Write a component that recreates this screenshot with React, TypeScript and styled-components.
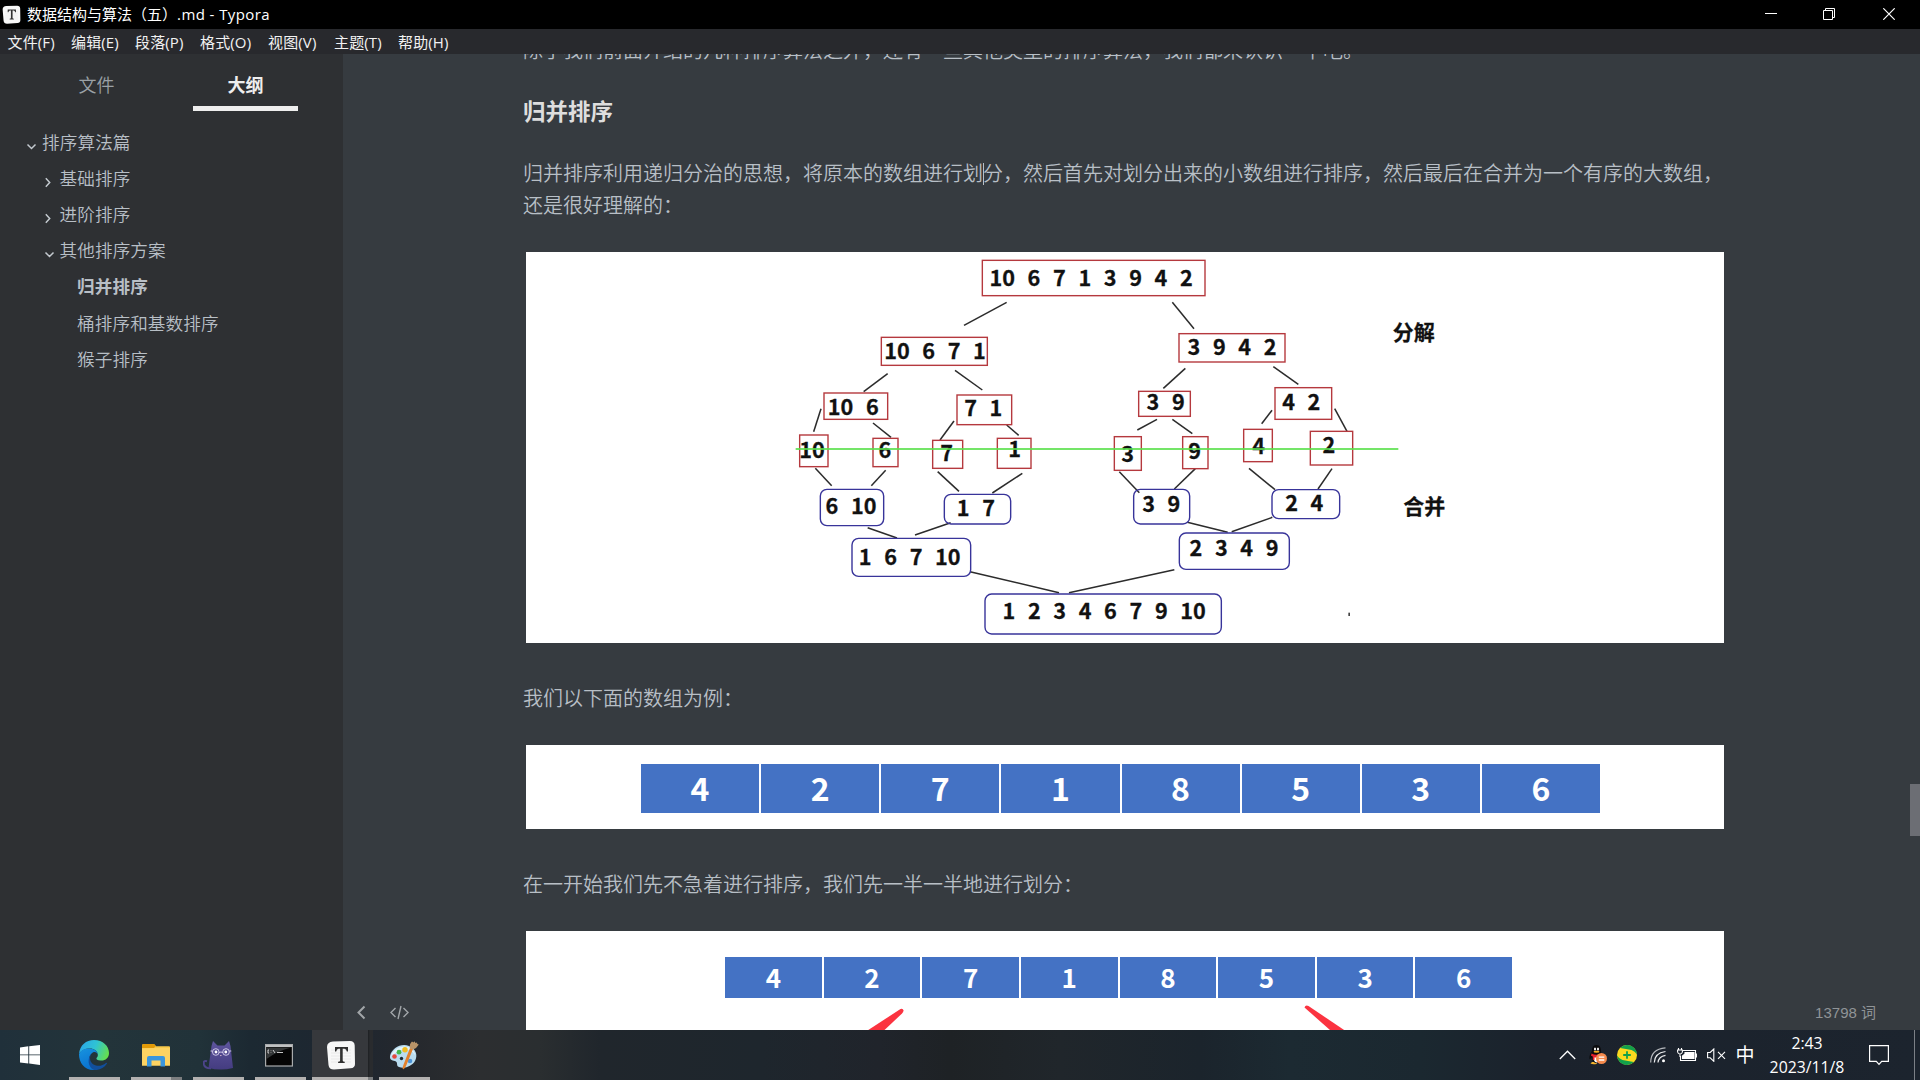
import React from "react";
import styled, { createGlobalStyle } from "styled-components";

const cjk = `"Noto Sans CJK SC", sans-serif`;
const ui = `"Open Sans", "Noto Sans", ${cjk}`;

const GlobalStyle = createGlobalStyle`
  * { box-sizing: border-box; }
  body { margin: 0; background: #363b40; }
`;

const Screen = styled.div`
  width: 1920px;
  height: 1080px;
  display: flex;
  flex-direction: column;
  overflow: hidden;
  font-family: ${ui};
`;

/* ---------- window chrome ---------- */

const TitleBar = styled.header`
  height: 29px;
  flex: none;
  display: flex;
  align-items: center;
  background: #000;
  color: #fff;
  padding: 0 1px 0 2px;
`;

const Title = styled.div`
  flex: 1;
  margin-left: 6px;
  font-size: 15px;
  line-height: 26px;
  height: 28px;
  white-space: pre;
`;

const Latin = styled.span<{ $spacing?: number }>`
  letter-spacing: ${(p) => p.$spacing ?? 0}px;
`;

const WindowButton = styled.div<{ $width: number }>`
  width: ${(p) => p.$width}px;
  height: 29px;
  display: flex;
  align-items: center;
  justify-content: center;
  padding-bottom: 1px;
`;

const MenuBar = styled.nav`
  height: 25px;
  flex: none;
  display: flex;
  gap: 16px;
  padding-left: 7.5px;
  background: #28292d;
  color: #f2f2f2;
`;

const MenuItem = styled.div<{ $width: number }>`
  width: ${(p) => p.$width}px;
  font-size: 15px;
  line-height: 27px;
  white-space: nowrap;
  letter-spacing: 0.15px;
`;

const Workspace = styled.div`
  height: 976px;
  flex: none;
  display: flex;
`;

/* ---------- sidebar ---------- */

const Sidebar = styled.aside`
  width: 343px;
  flex: none;
  background: #2e3033;
  color: #b8bfc6;
`;

const Tabs = styled.div`
  display: flex;
  gap: 44px;
  padding-left: 44px;
  height: 57px;
`;

const Tab = styled.div<{ $active?: boolean }>`
  width: 105px;
  height: 57px;
  text-align: center;
  font: ${(p) => (p.$active ? 700 : 350)} 18px/60px ${cjk};
  color: ${(p) => (p.$active ? "#eee" : "#9ba1a6")};
  border-bottom: ${(p) => (p.$active ? "5px solid #eee" : "0")};
`;

const Outline = styled.ul`
  list-style: none;
  margin: 0;
  padding: 13px 0 0 0;
`;

const OutlineRow = styled.li<{ $level: number; $active?: boolean }>`
  height: 36.1px;
  display: flex;
  align-items: center;
  gap: 5px;
  padding-left: ${(p) => 25 + (p.$level - 1) * 17.5}px;
  font: ${(p) => (p.$active ? 700 : 350)} 17.6px/36px ${cjk};
  letter-spacing: 0.12px;
`;

const ArrowSlot = styled.span`
  width: 12px;
  height: 14px;
  margin-top: 8px;
  display: flex;
  align-items: center;
  justify-content: center;
`;

/* ---------- editor ---------- */

const Editor = styled.main`
  position: relative;
  flex: 1;
  height: 976px;
  overflow: hidden;
  background: #363b40;
`;

const Article = styled.article`
  width: 1203px;
  margin: -20px 0 0 180px;
  color: #b8bfc6;
`;

const Paragraph = styled.p<{ $top?: number }>`
  margin: ${(p) => p.$top ?? 0}px 0 0;
  font: 350 20px/32px ${cjk};
  white-space: nowrap;
`;

const Heading = styled.h4`
  margin: 26px 0 0;
  height: 38px;
  font: 700 22.5px/36px ${cjk};
  color: #dedede;
`;

const Caret = styled.span`
  display: inline-block;
  width: 1px;
  height: 22px;
  margin-right: -1px;
  vertical-align: -4px;
  background: #b8bfc6;
`;

const Figure = styled.figure<{ $height: number; $pad?: number }>`
  width: 1198px;
  height: ${(p) => p.$height}px;
  margin: 31px 0 0 3px;
  padding-top: ${(p) => p.$pad ?? 0}px;
  background: #fff;
  overflow: hidden;
`;

const ArrayRow = styled.div<{ $left: number; $width: number; $height: number }>`
  display: flex;
  gap: 2px;
  width: ${(p) => p.$width}px;
  height: ${(p) => p.$height}px;
  margin-left: ${(p) => p.$left}px;
`;

const ArrayCell = styled.div<{ $size: number }>`
  flex: 1;
  display: flex;
  align-items: center;
  justify-content: center;
  background: #4472c4;
  color: #fff;
  font: 700 ${(p) => p.$size}px/1 ${cjk};
  padding-bottom: ${(p) => (p.$size > 30 ? 3 : 1)}px;
`;

const ScrollThumb = styled.div`
  position: absolute;
  right: 0;
  top: 730px;
  width: 10px;
  height: 52px;
  background: #6c6e74;
`;

const FooterTools = styled.div`
  position: absolute;
  left: 12px;
  bottom: 8px;
  display: flex;
  align-items: center;
  gap: 21px;
`;

const WordCount = styled.div`
  position: absolute;
  right: 44px;
  bottom: 6px;
  font: 400 15px/22px "Liberation Sans", ${cjk};
  color: #909497;
`;

/* ---------- taskbar ---------- */

const Taskbar = styled.footer`
  height: 50px;
  flex: none;
  display: flex;
  justify-content: space-between;
  background: linear-gradient(
    90deg,
    #20303a 0,
    #23343a 100px,
    #213239 200px,
    #1c2932 250px,
    #1e2630 350px,
    #25282d 410px,
    #2c2e30 480px,
    #2a2e30 540px,
    #20262c 600px,
    #1e262d 760px,
    #20242b 880px,
    #1e2225 950px,
    #20262b 1060px,
    #1b242c 1200px,
    #1c2a32 1290px,
    #1b2830 1420px,
    #1b222c 1540px,
    #1c242e 100%
  );
`;

const Apps = styled.div`
  display: flex;
`;

const AppButton = styled.div<{ $width: number; $gap?: number; $active?: boolean }>`
  width: ${(p) => p.$width}px;
  margin-right: ${(p) => p.$gap ?? 11}px;
  height: 50px;
  display: flex;
  flex-direction: column;
  justify-content: space-between;
  align-items: center;
  background: ${(p) => (p.$active ? "linear-gradient(90deg,#36383c 56px,#1d1f22 56px,#292b2e 58px)" : "none")};
`;

const AppIcon = styled.div<{ $shift?: number }>`
  height: 47px;
  padding-top: 3px;
  margin-left: ${(p) => p.$shift ?? 0}px;
  display: flex;
  align-items: center;
`;

const Running = styled.div<{ $stacked?: number }>`
  align-self: stretch;
  height: 3px;
  background: linear-gradient(
    90deg,
    #b3b1b0 calc(100% - ${(p) => p.$stacked ?? 0}px),
    #7c7e80 calc(100% - ${(p) => p.$stacked ?? 0}px)
  );
`;

const Tray = styled.div`
  display: flex;
  align-items: center;
  height: 50px;
  color: #fff;
`;

const TraySlot = styled.div<{ $width: number }>`
  width: ${(p) => p.$width}px;
  height: 50px;
  display: flex;
  align-items: center;
  justify-content: center;
`;

const InputMode = styled(TraySlot)`
  font: 400 19px/1 ${cjk};
  padding-bottom: 3px;
  margin-right: 5px;
`;

const Clock = styled.div`
  width: 90px;
  text-align: center;
  font: 400 15.8px/23.5px ${ui};
  padding-top: 1px;
`;

const NotificationSlot = styled(TraySlot)`
  padding-right: 8px;
`;

const ShowDesktop = styled.div`
  width: 6px;
  height: 50px;
  border-left: 1px solid #7b8086;
`;

/* ---------- merge sort diagram ---------- */

type DiagramNode = {
  box: [number, number, number, number];
  values: string;
  at: [number, number];
  merged?: boolean;
};

const nodes: DiagramNode[] = [
  { box: [607, 46, 668, 106], values: "10 6 7 1 3 9 4 2", at: [632, 123] },
  { box: [304, 277, 318, 84], values: "10 6 7 1", at: [316, 342] },
  { box: [1197, 266, 318, 85], values: "3 9 4 2", at: [1226, 330] },
  { box: [132, 444, 191, 79], values: "10 6", at: [147, 512] },
  { box: [531, 450, 164, 89], values: "7 1", at: [556, 514] },
  { box: [1076, 439, 155, 75], values: "3 9", at: [1103, 495] },
  { box: [1485, 428, 170, 95], values: "4 2", at: [1510, 496] },
  { box: [59, 570, 85, 95], values: "10", at: [61, 641] },
  { box: [279, 580, 75, 85], values: "6", at: [299, 641] },
  { box: [458, 586, 90, 84], values: "7", at: [484, 648] },
  { box: [652, 580, 101, 90], values: "1", at: [688, 638] },
  { box: [1003, 575, 81, 101], values: "3", at: [1027, 653] },
  { box: [1208, 575, 76, 96], values: "9", at: [1228, 642] },
  { box: [1391, 553, 86, 97], values: "4", at: [1420, 627] },
  { box: [1591, 559, 127, 101], values: "2", at: [1631, 626] },
  { box: [121, 733, 190, 109], values: "6 10", at: [140, 808], merged: true },
  { box: [493, 748, 199, 89], values: "1 7", at: [534, 815], merged: true },
  { box: [1061, 733, 168, 104], values: "3 9", at: [1090, 803], merged: true },
  { box: [1476, 734, 203, 87], values: "2 4", at: [1519, 798], merged: true },
  { box: [216, 880, 356, 114], values: "1 6 7 10", at: [240, 962], merged: true },
  { box: [1198, 864, 330, 109], values: "2 3 4 9", at: [1232, 935], merged: true },
  { box: [615, 1047, 709, 120], values: "1 2 3 4 6 7 9 10", at: [671, 1123], merged: true },
];

const edges: [number, number, number, number][] = [
  [680, 172, 552, 241], [1177, 172, 1242, 251], [323, 386, 251, 440], [525, 376, 607, 435],
  [123, 491, 101, 560], [279, 534, 333, 577], [522, 528, 480, 585], [680, 540, 716, 571],
  [106, 670, 155, 722], [317, 676, 274, 722], [473, 680, 537, 739], [727, 685, 637, 744],
  [263, 848, 351, 879], [512, 833, 405, 870], [1216, 370, 1150, 430], [1480, 365, 1555, 418],
  [1131, 523, 1072, 555], [1177, 523, 1237, 566], [1476, 496, 1445, 536], [1664, 491, 1701, 559],
  [1018, 680, 1078, 743], [1246, 671, 1183, 732], [1407, 670, 1485, 734], [1656, 671, 1614, 732],
  [1222, 832, 1343, 862], [1477, 817, 1355, 860], [570, 980, 837, 1043], [1183, 974, 867, 1043],
];

const DiagramSvg = styled.svg`
  display: block;
  text {
    font-family: ${cjk};
    font-weight: 700;
    fill: #111;
    stroke: #111;
    stroke-width: 0.8px;
  }
`;

const DIGIT = 38.1;

function NodeValues({ values, at }: { values: string; at: [number, number] }) {
  let slot = 0;
  return (
    <>
      {values.split(" ").map((v, i) => {
        const x = at[0] - 3.5 + slot * DIGIT;
        slot += v.length + 1;
        return (
          <text key={i} x={x} y={at[1] - 1} fontSize="65">
            {v}
          </text>
        );
      })}
    </>
  );
}

function MergeDiagram() {
  return (
    <DiagramSvg width="1198" height="391" viewBox="-762 21 3594 1173">
      {edges.map(([x1, y1, x2, y2], i) => (
        <line key={i} x1={x1} y1={y1} x2={x2} y2={y2} stroke="#2c2c2c" strokeWidth="4.6" />
      ))}
      {nodes.map((n, i) => (
        <g key={i}>
          <rect
            x={n.box[0]}
            y={n.box[1]}
            width={n.box[2]}
            height={n.box[3]}
            rx={n.merged ? 20 : 0}
            fill="none"
            stroke={n.merged ? "#38349a" : "#b5393e"}
            strokeWidth="4.2"
          />
          <NodeValues values={n.values} at={n.at} />
        </g>
      ))}
      <line x1="47" y1="612" x2="1855" y2="612" stroke="#5ce04e" strokeOpacity=".85" strokeWidth="6" />
      <text x="1838" y="284" fontSize="63">分解</text>
      <text x="1870" y="808" fontSize="63">合并</text>
      <rect x="1705" y="1103" width="5" height="10" fill="#444" />
    </DiagramSvg>
  );
}

/* ---------- icons ---------- */

function TyporaIcon({ size }: { size: number }) {
  return (
    <svg width={size} height={size} viewBox="0 0 30 30">
      <path d="M7 1.500 24 1q4.500 0 4.700 4.500L29 24q0 4-4.500 4.300L8 29.500Q3 29.500 2.500 25L1 7Q1 2 7 1.500Z" fill="#f7f7f7" />
      <path d="M5 10h20M5 13h20M5 16h20M5 19h20M5 22h20" stroke="#e2e2e2" strokeWidth=".7" />
      <path d="M9 7h13v4.500h-1.200q-.4-2.700-2.400-2.700h-1.700v11.700q0 1.300 2 1.300V23h-6.600v-1.200q2 0 2-1.300V8.800h-1.500q-2 0-2.400 2.700H9Z" fill="#303030" />
    </svg>
  );
}

function Chevron({ open }: { open: boolean }) {
  return (
    <svg width="12" height="12" viewBox="0 0 12 12" fill="none" stroke="#c3c9cf" strokeWidth="1.500">
      <path d={open ? "M2.500 4.500l4 4 4-4" : "M2.800 2.300l3.900 4.200-3.900 4.200"} />
    </svg>
  );
}

function EdgeIcon() {
  return (
    <svg width="30" height="30" viewBox="0 0 30 30">
      <defs>
        <linearGradient id="edgeTop" x1="0" y1=".3" x2="1" y2=".6">
          <stop offset="0" stopColor="#2aa7e8" />
          <stop offset=".5" stopColor="#2fc3d4" />
          <stop offset="1" stopColor="#66e04c" />
        </linearGradient>
        <linearGradient id="edgeLow" x1="0" y1="0" x2=".4" y2="1">
          <stop offset="0" stopColor="#1793df" />
          <stop offset="1" stopColor="#0a72d0" />
        </linearGradient>
      </defs>
      <path d="M0 14C1 5 7 0 15 0c9 0 15 6 15 13 0 5-4 8-8.500 7.500-3 0-4.500-1-4-2.500 1-1 1.500-2 1.300-3.500C18.500 11 15 8.500 11 8.500 6 8.500 2 10.500 0 14Z" fill="url(#edgeTop)" />
      <path d="M0 14c2-4 6-5.700 10.500-5.400 4.500.2 8 2.500 8.300 5.500-1-1.700-2.300-2.400-3.800-2.100-2.500.5-5 4-5 8 0 5 3.500 9 8.500 9.500C7 32 0 24 0 14Z" fill="url(#edgeLow)" />
      <path d="M13 13c-4 5-1.500 11 4 12.500 3.500 1 7-.2 10-2.500.8-.4 1.200.2.8.8C25 28 20 30.500 15.500 30 9 28 7.500 18 13 13Z" fill="#124f9c" />
    </svg>
  );
}

function FolderIcon() {
  return (
    <svg width="28" height="23" viewBox="0 0 28 23">
      <path d="M0 1.500Q0 0 1.500 0H12l2 2.200h13q1 0 1 1V21.500H0Z" fill="#f8c94a" />
      <path d="M0 1.500Q0 0 1.500 0H12l1.800 2L12 4H0Z" fill="#e29a08" />
      <path d="M13 4h15v17.500H0V4.500Z" fill="#fdd362" />
      <path d="M5 22.500V14q0-2 2-2h14q2 0 2 2v8.500h-4.500v-6h-9v6Z" fill="#3a96dd" />
    </svg>
  );
}

function CatIcon() {
  return (
    <svg width="30" height="29" viewBox="0 0 30 29">
      <defs>
        <linearGradient id="cat" x1="0" y1="0" x2="0" y2="1">
          <stop offset="0" stopColor="#5e559e" />
          <stop offset="1" stopColor="#443c80" />
        </linearGradient>
      </defs>
      <path d="M4 20.200Q0 19 .9 23.500 2 27.500 8 27.300" fill="none" stroke="#4c448a" strokeWidth="2" />
      <path d="M8.500 5 10 0l4.500 4.500h7L26 0l1.500 5 2.500 22q-12 3-24.500 0Z" fill="url(#cat)" />
      <g fill="none" stroke="#d9d3ee" strokeWidth=".9">
        <circle cx="12.800" cy="11" r="3.300" />
        <circle cx="23" cy="11" r="3.300" />
        <path d="M9.500 10H7.500M26.300 10h2M16 11.500q2-1 3.800 0" />
      </g>
      <circle cx="13" cy="11" r="1.400" fill="#fff" />
      <circle cx="22.800" cy="11" r="1.400" fill="#fff" />
      <path d="M16.800 14h2l-1 1.200Z" fill="#efc8d7" />
    </svg>
  );
}

function TerminalIcon() {
  return (
    <svg width="28" height="23" viewBox="0 0 28 23">
      <rect x=".6" y=".6" width="26.800" height="21.400" fill="#050505" stroke="#a9abac" strokeWidth="1.200" />
      <path d="M1 1h26v2H1Z" fill="#bfc1c2" />
      <path d="M1.500 3.500h25Q14 6 1.500 15Z" fill="#333637" />
      <path d="M4 6H3v3h1M6 6.500v.6M6 8.500v.5M8 6l2 3M12 8.500h6" fill="none" stroke="#ddd" strokeWidth=".9" />
    </svg>
  );
}

function PaintIcon() {
  return (
    <svg width="30" height="29" viewBox="0 0 30 29">
      <path d="M1 15C3 7 12 2 20 5c7 3 9 9 6 15-3 5-10 8-16 6-3-1-1-4-3-5.500C4 19 .5 20 1 15Z" fill="#b9dcef" />
      <path d="M2 15C4 8 12 4 19 6c4 1 7 5 7 8-3-5-9-7-14-5-4 1-6 4-10 6Z" fill="#e3f4fc" />
      <circle cx="5.500" cy="15.500" r="2.300" fill="#e5483d" />
      <circle cx="10" cy="11.200" r="2.400" fill="#43b84c" />
      <circle cx="16" cy="8.800" r="2.700" fill="#f2bd22" />
      <circle cx="12.500" cy="17.500" r="1.700" fill="#1e2c36" />
      <circle cx="21" cy="20" r="2.300" fill="#4b92d6" />
      <path d="M24 8 17 25q-1.500 3.500-2.800 3.300-1.300-.5.200-4.300L21 7Z" fill="#e2812c" />
      <path d="M21 7.500Q20 3 23 .5l1.500 1 1-1.200 1 1.700 1.500-.5.3 1.500 1.500.5Q28 7 24 8.500Z" fill="#b99468" />
    </svg>
  );
}

function WindowsIcon() {
  return (
    <svg width="20" height="20" viewBox="0 0 20 20" fill="#fff">
      <path d="M0 2.500 8.300 1.300v8.100H0ZM9.200 1.200 20 0v9.400H9.200ZM0 10.300h8.300v8.200L0 17.400ZM9.200 10.300H20V20L9.200 18.600Z" />
    </svg>
  );
}

function QQIcon() {
  return (
    <svg width="20" height="20" viewBox="0 0 20 20">
      <path d="M2.500 18.500q2 1.300 6 .5l1-2H4Z" fill="#f2b32c" />
      <path d="M8.500 0C5 0 4 3 4 6 2.500 8.500 1 11 1.500 14c.5.5 1.500-.5 2-1.500.5 3 2 5.500 5 5.500 4 0 5-3 5-6C13.500 10 13 8 13 6c0-3-1-6-4.500-6Z" fill="#0b0b0d" />
      <path d="M5.500 11q0 6 3 6.500 3.500 0 3.500-6.500Z" fill="#fff" />
      <path d="M3.500 8.500q5 2.500 9.800 0l.2 2.300Q8 13 6.500 12.200V15H4.800v-3.500L3 10.800Z" fill="#e51f2b" />
      <ellipse cx="7" cy="4" rx="1" ry="1.500" fill="#fff" />
      <ellipse cx="10" cy="4" rx="1" ry="1.500" fill="#fff" />
      <ellipse cx="8.500" cy="6.800" rx="3" ry="1" fill="#f4ae22" />
      <circle cx="13.500" cy="13.500" r="5.500" fill="#f58a4d" />
      <path d="M10.800 12.200h5.500M10.800 15h5.500" stroke="#fff" strokeWidth="1.300" />
    </svg>
  );
}

function GuardIcon() {
  return (
    <svg width="20" height="20" viewBox="0 0 20 20">
      <circle cx="10" cy="10" r="10" fill="#fbd91f" />
      <path d="M3.200 3Q6-.2 11 0q8 1 9 9.500-2-3.500-5.500-4.500-3-.7-5.500-1Q6 3.500 3.200 3ZM16.800 17q-3 3.200-7.800 3Q1 19 0 10.500q2 3.500 5.500 4.500 3 .7 5.500 1 3 .5 5.800 1Z" fill="#12a04b" />
      <path d="M10 6.200v7.600M6.200 10h7.600" stroke="#12a04b" strokeWidth="1.800" />
    </svg>
  );
}

function WifiIcon() {
  return (
    <svg width="16" height="16" viewBox="0 0 16 16" fill="none" stroke="#e8eaec" strokeWidth="1.200">
      <path d="M.7 15.500Q.7 2 15.500.8" strokeOpacity=".75" />
      <path d="M4.300 15.500Q4.500 6 15.500 4.500" />
      <path d="M8 15.500Q8.500 9.500 15.500 8.300" />
      <circle cx="13.500" cy="13.700" r="1.500" fill="#fff" stroke="none" />
    </svg>
  );
}

function BatteryIcon() {
  return (
    <svg width="20" height="14" viewBox="0 0 20 14" fill="none" stroke="#fff" strokeWidth="1.100">
      <path d="M6 2.500h12.500v10H3.500V8" />
      <path d="M8 4.500h9v6H5.500V8L8 6Z" fill="#fff" />
      <path d="M19.400 5.500v4M1.500 0v2M4.500 0v2M.6 2h4.800v2Q5 6 3 6T.6 4ZM3 6v3" />
    </svg>
  );
}

function MuteIcon() {
  return (
    <svg width="19" height="14" viewBox="0 0 19 14" fill="none" stroke="#fff" strokeWidth="1.100">
      <path d="M.6 4.500h2.600L6.800 1v12.300L3.200 9.800H.6Z" />
      <path d="m11 3.800 7 7M18 3.800l-7 7" />
    </svg>
  );
}

/* ---------- content ---------- */

const menu: [string, number][] = [
  ["文件(F)", 47.5], ["编辑(E)", 48], ["段落(P)", 49], ["格式(O)", 52],
  ["视图(V)", 50], ["主题(T)", 48], ["帮助(H)", 52],
];

const outline: { label: string; level: number; open?: boolean; active?: boolean }[] = [
  { label: "排序算法篇", level: 1, open: true },
  { label: "基础排序", level: 2, open: false },
  { label: "进阶排序", level: 2, open: false },
  { label: "其他排序方案", level: 2, open: true },
  { label: "归并排序", level: 3, active: true },
  { label: "桶排序和基数排序", level: 3 },
  { label: "猴子排序", level: 3 },
];

const numbers = [4, 2, 7, 1, 8, 5, 3, 6];

export default function App() {
  return (
    <Screen>
      <GlobalStyle />
      <TitleBar>
        <TyporaIcon size={19} />
        <Title>
          数据结构与算法（五）<Latin $spacing={0.42}>.md - Typora</Latin>
        </Title>
        <WindowButton $width={58}>
          <svg width="12" height="12"><path d="M0 5.500h12" stroke="#fff" /></svg>
        </WindowButton>
        <WindowButton $width={58}>
          <svg width="12" height="12" fill="none" stroke="#fff"><path d="M.5 2.500h9v9h-9ZM2.500 2.500v-2h9v9h-2" /></svg>
        </WindowButton>
        <WindowButton $width={61}>
          <svg width="12" height="12"><path d="m.3.3 11.400 11.400M11.700.3.3 11.700" stroke="#fff" strokeWidth="1.200" /></svg>
        </WindowButton>
      </TitleBar>
      <MenuBar>
        {menu.map(([label, width]) => (
          <MenuItem key={label} $width={width}>{label}</MenuItem>
        ))}
      </MenuBar>
      <Workspace>
        <Sidebar>
          <Tabs>
            <Tab>文件</Tab>
            <Tab $active>大纲</Tab>
          </Tabs>
          <Outline>
            {outline.map((o) => (
              <OutlineRow key={o.label} $level={o.level} $active={o.active}>
                <ArrowSlot>{o.open !== undefined && <Chevron open={o.open} />}</ArrowSlot>
                {o.label}
              </OutlineRow>
            ))}
          </Outline>
        </Sidebar>
        <Editor>
          <Article>
            <Paragraph>除了我们前面介绍的几种排序算法之外，还有一些其他类型的排序算法，我们都来认识一下吧。</Paragraph>
            <Heading>归并排序</Heading>
            <Paragraph $top={27}>
              归并排序利用递归分治的思想，将原本的数组进行划<Caret />分，然后首先对划分出来的小数组进行排序，然后最后在合并为一个有序的大数组，
              <br />
              还是很好理解的：
            </Paragraph>
            <Figure $height={391}>
              <MergeDiagram />
            </Figure>
            <Paragraph $top={39}>我们以下面的数组为例：</Paragraph>
            <Figure $height={84} $pad={19}>
              <ArrayRow $left={115} $width={959} $height={49}>
                {numbers.map((n) => <ArrayCell key={n} $size={32}>{n}</ArrayCell>)}
              </ArrayRow>
            </Figure>
            <Paragraph $top={39}>在一开始我们先不急着进行排序，我们先一半一半地进行划分：</Paragraph>
            <Figure $height={140} $pad={26}>
              <ArrayRow $left={199} $width={787} $height={41}>
                {numbers.map((n) => <ArrayCell key={n} $size={26}>{n}</ArrayCell>)}
              </ArrayRow>
              <svg width="1198" height="40" viewBox="0 0 1198 40" fill="#fb3340">
                <path d="M374.500 11q2.500-1 3 1.500 0 1.500-1.500 3L350 40h-20Z" />
                <path d="M778.500 9.500q1-3 4-1.500L830 40h-17Z" />
              </svg>
            </Figure>
          </Article>
          <ScrollThumb />
          <FooterTools>
            <svg width="13" height="20" fill="none" stroke="#a2a6a9" strokeWidth="2"><path d="M9.500 4.500 3.500 10.500l6 6" /></svg>
            <svg width="20" height="20" fill="none" stroke="#a2a6a9" strokeWidth="1.400">
              <path d="M6.500 6 2 10.500 6.500 15M14.500 6 19 10.500 14.500 15M12 4 9 17" />
            </svg>
          </FooterTools>
          <WordCount>13798 词</WordCount>
        </Editor>
      </Workspace>
      <Taskbar>
        <Apps>
          <AppButton $width={60} $gap={9}><AppIcon><WindowsIcon /></AppIcon></AppButton>
          <AppButton $width={51}><AppIcon $shift={-1}><EdgeIcon /></AppIcon><Running /></AppButton>
          <AppButton $width={51}><AppIcon $shift={-1}><FolderIcon /></AppIcon><Running $stacked={11} /></AppButton>
          <AppButton $width={51}><AppIcon $shift={-1}><CatIcon /></AppIcon><Running /></AppButton>
          <AppButton $width={51} $gap={6}><AppIcon $shift={-3}><TerminalIcon /></AppIcon><Running /></AppButton>
          <AppButton $width={61} $gap={6} $active><AppIcon $shift={-3}><TyporaIcon size={30} /></AppIcon><Running $stacked={5} /></AppButton>
          <AppButton $width={51}><AppIcon $shift={-1}><PaintIcon /></AppIcon><Running /></AppButton>
        </Apps>
        <Tray>
          <TraySlot $width={32}>
            <svg width="17" height="10" fill="none" stroke="#fff" strokeWidth="1.300"><path d="M.8 9 8.500 1.200 16.200 9" /></svg>
          </TraySlot>
          <TraySlot $width={30}><QQIcon /></TraySlot>
          <TraySlot $width={28}><GuardIcon /></TraySlot>
          <TraySlot $width={34}><WifiIcon /></TraySlot>
          <TraySlot $width={24}><BatteryIcon /></TraySlot>
          <TraySlot $width={34}><MuteIcon /></TraySlot>
          <InputMode $width={24}>中</InputMode>
          <Clock>
            2:43
            <br />
            2023/11/8
          </Clock>
          <NotificationSlot $width={62}>
            <svg width="20" height="21" fill="none" stroke="#fff" strokeWidth="1.200"><path d="M.6.6h18.800v15.800h-6.700L10 19.300l-2.700-2.900H.6Z" /></svg>
          </NotificationSlot>
          <ShowDesktop />
        </Tray>
      </Taskbar>
    </Screen>
  );
}
